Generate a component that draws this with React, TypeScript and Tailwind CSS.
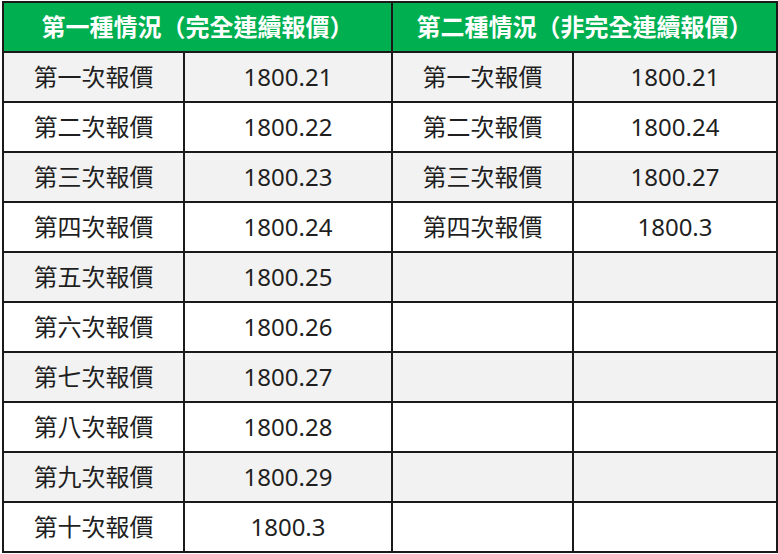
const first = ['1800.21', '1800.22', '1800.23', '1800.24', '1800.25', '1800.26', '1800.27', '1800.28', '1800.29', '1800.3'];
const second = ['1800.21', '1800.24', '1800.27', '1800.3'];
const labels = ['第一次報價', '第二次報價', '第三次報價', '第四次報價', '第五次報價', '第六次報價', '第七次報價', '第八次報價', '第九次報價', '第十次報價'];

const font = { fontFamily: '"Noto Sans", "Noto Sans CJK TC", sans-serif' };

function Cell({ children, shade }: { children?: React.ReactNode; shade: boolean }) {
  return (
    <div
      className={`flex h-[50px] items-center justify-center border-b-2 border-r-2 border-[#1a1a1a] text-[24px] text-[#1f1f1f] ${
        shade ? 'bg-[#f2f2f2]' : 'bg-white'
      }`}
    >
      {children}
    </div>
  );
}

export default function App() {
  return (
    <div className="h-[554px] w-[778px] bg-white pl-[2px] pt-[1px]" style={font}>
      <div className="grid grid-cols-[181px_208px_181px_204px] border-l-2 border-t-2 border-[#1a1a1a]">
        <div className="col-span-2 flex h-[50px] items-center justify-center border-b-2 border-r-2 border-[#1a1a1a] bg-[#00b050] text-[24px] font-bold text-white">
          第一種情況（完全連續報價）
        </div>
        <div className="col-span-2 flex h-[50px] items-center justify-center border-b-2 border-r-2 border-[#1a1a1a] bg-[#00b050] text-[24px] font-bold text-white">
          第二種情況（非完全連續報價）
        </div>
        {labels.map((label, i) => {
          const shade = i % 2 === 0;
          return [
            <Cell key={`a${i}`} shade={shade}>{label}</Cell>,
            <Cell key={`b${i}`} shade={shade}>{first[i]}</Cell>,
            <Cell key={`c${i}`} shade={shade}>{i < second.length ? label : null}</Cell>,
            <Cell key={`d${i}`} shade={shade}>{second[i]}</Cell>,
          ];
        })}
      </div>
    </div>
  );
}
